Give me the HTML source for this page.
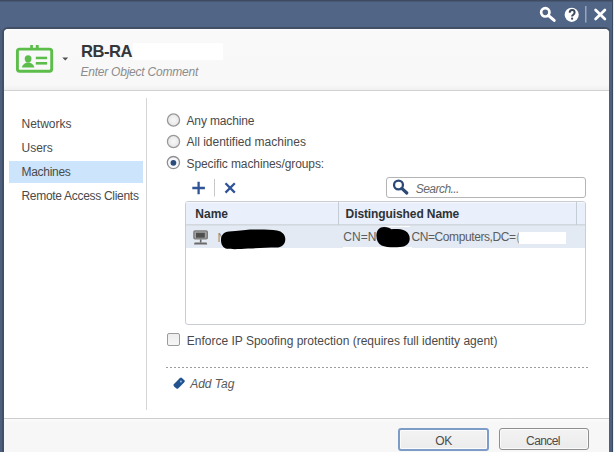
<!DOCTYPE html>
<html><head><meta charset="utf-8">
<style>
*{margin:0;padding:0;box-sizing:border-box}
html,body{width:614px;height:452px;overflow:hidden;background:#516587;font-family:"Liberation Sans",sans-serif}
.a{position:absolute}
.t{position:absolute;line-height:1;white-space:nowrap;font-size:12px;color:#4a4a4a}
#dlg{position:absolute;left:2px;top:27px;width:609px;height:430px;background:#fff;border:2px solid #414e64;border-radius:6px 6px 0 0;overflow:hidden}
</style></head><body>
<!-- title bar icons -->
<div class="a" style="left:0;top:0;width:614px;height:1px;background:#3d4a62"></div>
<div class="a" style="left:0;top:1px;width:614px;height:1px;background:#475873"></div>
<svg class="a" style="left:0;top:0" width="614" height="28" viewBox="0 0 614 28">
  <circle cx="545.3" cy="12.35" r="4.15" fill="none" stroke="#fff" stroke-width="2.7"/>
  <line x1="548.6" y1="15.6" x2="554.2" y2="20.4" stroke="#fff" stroke-width="3" stroke-linecap="round"/>
  <circle cx="571.7" cy="14.85" r="7.05" fill="#fff"/>
  <path d="M569.7 12.8 Q569.7 10.1 572.1 10.1 Q574.6 10.1 574.6 12.5 Q574.6 14 573.1 14.8 Q572.1 15.3 572.1 16.6" fill="none" stroke="#3e4a5c" stroke-width="2"/><circle cx="572.1" cy="18.7" r="1.15" fill="#3e4a5c"/>
  <rect x="585.2" y="6" width="1.2" height="16.6" fill="#a7b6cc"/>
  <path d="M595.6 10 L604.9 19 M604.9 10 L595.6 19" stroke="#fff" stroke-width="2.7" stroke-linecap="round"/>
</svg>

<div id="dlg"></div>
<!-- header -->
<div class="a" style="left:4px;top:29px;width:605px;height:61px;background:linear-gradient(#fdfdfd 0,#f9f9f9 2px,#f8f8f8 56px,#f0f0f0 61px);border-radius:4.5px 4.5px 0 0"></div>
<div class="a" style="left:4px;top:90px;width:605px;height:1px;background:#d2d2d2"></div>
<!-- header icon -->
<svg class="a" style="left:0;top:0" width="100" height="90" viewBox="0 0 100 90">
  <rect x="17.4" y="49.1" width="34.3" height="22.2" rx="2.2" fill="none" stroke="#5cbd4b" stroke-width="2.9"/>
  <rect x="30.2" y="45" width="2.7" height="3" fill="#5cbd4b"/>
  <rect x="35.8" y="45" width="2.9" height="3" fill="#5cbd4b"/>
  <ellipse cx="28.1" cy="58.8" rx="3.4" ry="3.6" fill="#5cbd4b"/>
  <path d="M21.8 67.6 L22.6 65.6 Q24 63.6 26.6 62.6 L29.6 62.6 Q32.4 63.6 33.6 65.6 L34.4 67.6 Z" fill="#5cbd4b"/>
  <rect x="35.8" y="56.7" width="11.3" height="2.5" fill="#5cbd4b"/>
  <rect x="35.8" y="62" width="11.3" height="2.6" fill="#5cbd4b"/>
  <path d="M62.3 57.4 L68.2 57.4 L65.25 60.6 Z" fill="#505050"/>
</svg>
<div class="t" style="left:81px;top:44.2px;font-size:16.6px;letter-spacing:-0.5px;font-weight:bold;color:#33373c">RB-RA</div>
<div class="a" style="left:133px;top:43px;width:90px;height:17px;background:#fff"></div>
<div class="t" style="left:80.4px;top:65.5px;font-style:italic;letter-spacing:-0.22px;color:#8c8c8c">Enter Object Comment</div>

<!-- left nav -->
<div class="a" style="left:9px;top:161px;width:134px;height:22px;background:#cce5fd"></div>
<div class="t" style="left:21.5px;top:117.8px">Networks</div>
<div class="t" style="left:21.5px;top:141.6px">Users</div>
<div class="t" style="left:21.5px;top:165.6px;letter-spacing:-0.3px">Machines</div>
<div class="t" style="left:21.5px;top:189.6px;letter-spacing:-0.3px">Remote Access Clients</div>
<div class="a" style="left:145.5px;top:98px;width:1.5px;height:312px;background:#d6d6d6"></div>

<!-- radios -->
<svg class="a" style="left:160px;top:105px" width="30" height="70" viewBox="160 105 30 70">
  <defs><radialGradient id="rg" cx="0.5" cy="0.5" r="0.5"><stop offset="0" stop-color="#f8f8f8"/><stop offset="1" stop-color="#e6e6e6"/></radialGradient></defs>
  <circle cx="173.5" cy="120" r="6.1" fill="url(#rg)" stroke="#999" stroke-width="1.3"/>
  <circle cx="173.5" cy="141.5" r="6.1" fill="url(#rg)" stroke="#999" stroke-width="1.3"/>
  <circle cx="173.4" cy="162.6" r="6.1" fill="#f6f8fc" stroke="#8e8e8e" stroke-width="1.3"/>
  <circle cx="173.4" cy="162.8" r="2.9" fill="#2a4c7c"/>
</svg>
<div class="t" style="left:186.5px;top:115.4px;letter-spacing:-0.15px">Any machine</div>
<div class="t" style="left:186.5px;top:136.2px">All identified machines</div>
<div class="t" style="left:186.5px;top:157.6px;letter-spacing:-0.1px">Specific machines/groups:</div>

<!-- toolbar -->
<svg class="a" style="left:185px;top:175px" width="60" height="25" viewBox="185 175 60 25">
  <path d="M192.3 188 H204.9 M198.6 181.8 V194.2" stroke="#2f5597" stroke-width="2.3"/>
  <rect x="214" y="179" width="1" height="17.5" fill="#c8c8c8"/>
  <path d="M225.5 183.3 L234.8 192.6 M234.8 183.3 L225.5 192.6" stroke="#2f5597" stroke-width="2.3"/>
</svg>

<!-- search -->
<div class="a" style="left:386px;top:177px;width:200px;height:21px;border:1px solid #b4b4b4;border-radius:3px;background:#fff"></div>
<svg class="a" style="left:386px;top:177px" width="30" height="21" viewBox="386 177 30 21">
  <circle cx="398.5" cy="185" r="4.45" fill="none" stroke="#2b4877" stroke-width="2.3"/>
  <line x1="401.8" y1="188.4" x2="406.8" y2="193" stroke="#2b4877" stroke-width="3.2" stroke-linecap="round"/>
</svg>
<div class="t" style="left:415.8px;top:183px;font-style:italic;letter-spacing:-0.55px;color:#6a6a6a">Search...</div>

<!-- table -->
<div class="a" style="left:185px;top:201px;width:401px;height:124px;border:1px solid #c9ced4;border-radius:3px;background:#fff;overflow:hidden">
  <div class="a" style="left:0;top:0;width:399px;height:23px;background:#e9f0fb;border-top:1px solid #f6f8fc;border-bottom:1px solid #d3d8df"></div>
  <div class="a" style="left:152px;top:0;width:1px;height:23px;background:#c6ccd4"></div>
  <div class="a" style="left:390px;top:0;width:1px;height:23px;background:#c6ccd4"></div>
  <div class="a" style="left:0;top:23px;width:399px;height:23px;background:#e3eaf4;border-top:1px solid #d9dfe7"></div>
</div>
<div class="t" style="left:195.3px;top:207.8px;font-weight:bold;color:#2e3236">Name</div>
<div class="t" style="left:345.6px;top:207.8px;font-weight:bold;letter-spacing:-0.1px;color:#2e3236">Distinguished Name</div>
<svg class="a" style="left:190px;top:226px" width="22" height="22" viewBox="190 226 22 22">
  <rect x="193.2" y="230.2" width="14.8" height="9.4" rx="1.8" fill="#7c7c7c"/>
  <rect x="194.6" y="231.5" width="12" height="6.8" rx="0.8" fill="#a2a2a2"/>
  <rect x="196" y="232.8" width="8.8" height="4.9" fill="#4e4e4e"/>
  <rect x="199.9" y="239.4" width="1.6" height="3.2" fill="#666"/>
  <path d="M194.6 242.6 H206.6 L207.2 244.6 H194 Z" fill="#6a6a6a"/>
</svg>
<div class="t" style="left:217.6px;top:232.2px;color:#8a8a8a">N</div>
<svg class="a" style="left:0;top:0" width="614" height="260" viewBox="0 0 614 260">
  <path d="M229 231.5 C238 231 244 230 250 229.6 C260 229.2 270 229.4 277 230.5 C282 231.5 285.3 234.5 285.3 239 C285.3 244.5 282 247.5 276 247.6 C268 247.8 258 248 248 248.6 C240 249.2 232 249.4 227 248.8 C223 248 221 244.5 221 240.2 C221 235 224 231.8 229 231.5 Z" fill="#000"/>
</svg>
<div class="t" style="left:343.3px;top:231.2px;color:#5c5c5c">CN=N</div>
<div class="a" style="left:386px;top:225.6px;width:24px;height:1.2px;background:#fff"></div>
<div class="a" style="left:343px;top:246.8px;width:69px;height:1.2px;background:#fff"></div>
<svg class="a" style="left:0;top:0" width="614" height="260" viewBox="0 0 614 260">
  <path d="M384 226.9 C388 226.9 390 228.4 391.5 229.2 C396 229 402 229 405.5 231 C408.5 233 409.7 235.5 409.7 238.5 C409.7 243 407 246.5 400 247.1 C394 247.5 386 247.5 381.5 245.5 C378 243.5 376.4 240 376.4 235.5 C376.4 230 379.5 226.9 384 226.9 Z" fill="#000"/>
</svg>
<div class="t" style="left:411.4px;top:231.2px;letter-spacing:-0.4px;color:#5c5c5c">CN=Computers,DC=</div>
<div class="t" style="left:516.2px;top:231.2px;color:#9a9a9a">(</div><div class="a" style="left:519px;top:232px;width:47px;height:12px;background:#fff"></div>

<!-- checkbox -->
<div class="a" style="left:167px;top:333px;width:13px;height:13px;border:1.3px solid #9c9c9c;border-radius:2px;background:linear-gradient(#ededed,#f6f6f6)"></div>
<div class="t" style="left:186.8px;top:335.1px">Enforce IP Spoofing protection (requires full identity agent)</div>

<!-- dotted -->
<div class="a" style="left:166px;top:367px;width:424px;height:1px;background:repeating-linear-gradient(90deg,#9c9c9c 0 2px,transparent 2px 4px)"></div>

<!-- tag -->
<svg class="a" style="left:168px;top:372px" width="24" height="22" viewBox="168 372 24 22">
  <g transform="rotate(-45 179.2 383.1)">
    <path d="M174.6 380 H183 Q184.8 380 184.8 381.4 V384.8 Q184.8 386.2 183 386.2 H174.6 Q173.2 386.2 173.2 383.1 Q173.2 380 174.6 380 Z" fill="#22538f"/>
  </g>
  <circle cx="180.9" cy="381.4" r="1" fill="#8fb8ee"/>
</svg>
<div class="t" style="left:190.2px;top:377.5px;font-style:italic;color:#5a5a5a">Add Tag</div>

<!-- footer -->
<div class="a" style="left:4px;top:418px;width:605px;height:1px;background:#cdcdcd"></div>
<div class="a" style="left:4px;top:419px;width:605px;height:33px;background:linear-gradient(#fbfbfb,#f7f7f7 3px)"></div>
<div class="a" style="left:398px;top:428px;width:91px;height:23px;border:2px solid #7d9dc8;border-radius:3px;background:linear-gradient(#f3f3f3,#ececec);box-shadow:inset 0 0 0 1px #fbfbfb"></div>
<div class="a" style="left:499px;top:428px;width:90px;height:22px;border:1.6px solid #8e8e8e;border-radius:3px;background:linear-gradient(#f3f3f3,#ebebeb);box-shadow:inset 0 0 0 1px #fafafa"></div>
<div class="t" style="left:398px;width:91px;text-align:center;top:434.6px;letter-spacing:-0.5px;color:#4c4c4c">OK</div>
<div class="t" style="left:498px;width:90px;text-align:center;top:434.6px;letter-spacing:-0.6px;color:#4c4c4c">Cancel</div>

<!-- right/left dark borders -->
<div class="a" style="left:0;top:29px;width:2px;height:423px;background:#4c5f7e"></div>
<div class="a" style="left:2px;top:31px;width:2px;height:421px;background:#414f68"></div>
<div class="a" style="left:609px;top:31px;width:3px;height:421px;background:#4e6080"></div>
<div class="a" style="left:612px;top:0;width:1px;height:452px;background:#3a4a5c"></div>
<div class="a" style="left:613px;top:0;width:1px;height:452px;background:#e6eef0"></div>
</body></html>
